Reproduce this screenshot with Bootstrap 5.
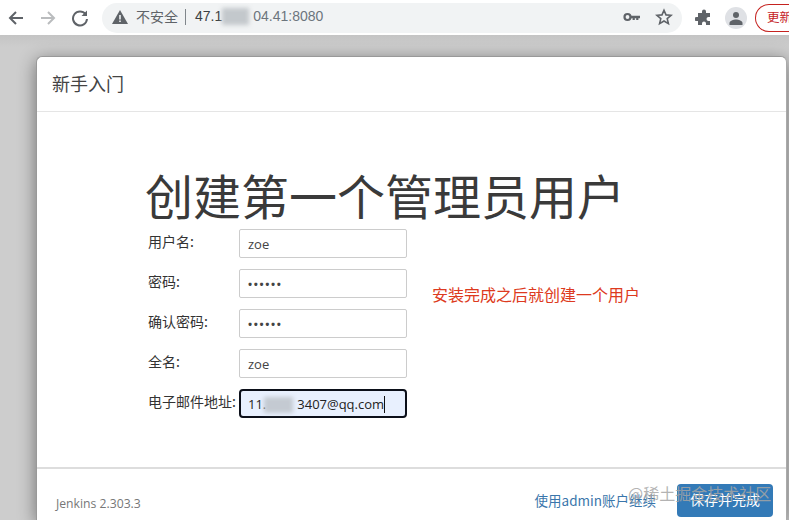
<!DOCTYPE html>
<html lang="zh">
<head>
<meta charset="utf-8">
<title>Jenkins</title>
<link href="https://cdn.jsdelivr.net/npm/bootstrap@5.3.0/dist/css/bootstrap.min.css" rel="stylesheet">
<style>
html,body{height:520px;overflow:hidden;}
body{font-family:"Liberation Sans","Noto Sans CJK SC",sans-serif;background:#ccc;color:#333;position:relative;}
.tb{height:35px;background:#fff;padding-left:7px;overflow:hidden;}
.ic{width:18px;height:18px;flex:none;}
.ic-gap{margin-left:14px;}
.omni{margin-left:13px;width:580px;height:30px;flex:none;background:#f1f3f4;border-radius:15px;padding:0 0 2px 9px;font-size:14px;color:#3c4043;}
.omni-sec{color:#5f6368;font-size:14px;margin-left:7px;font-family:"Noto Sans CJK SC",sans-serif;}
.omni-sep{width:1px;height:16px;background:#80868b;margin:0 9px 0 7px;}
.omni-host{position:relative;white-space:nowrap;}
.omni-gap{display:inline-block;width:31px;}
.smudge{position:absolute;background:#c3c8cc;filter:blur(2px);}
.smudge-a{left:27px;top:2px;width:27px;height:17px;}
.smudge-b{left:16px;top:2px;width:29px;height:16px;background:#c4cad2;}
.omni-end{margin-left:auto;gap:14px;padding-right:9px;}
.ext{margin-left:13px;}
.upd{width:60px;height:28px;border:1px solid #c5221f;border-radius:14px 0 0 14px;border-right:0;color:#c5221f;font-size:12.5px;padding-left:11px;margin-left:8px;white-space:nowrap;overflow:hidden;font-family:"Noto Sans CJK SC",sans-serif;flex:none;}
.avatar{width:22px;height:22px;border-radius:50%;background:#dfe1e5;flex:none;margin-left:12px;}
.stage{padding:21px 2px 0 36px;background:linear-gradient(#c4c4c4,#cdcdcd 12px);height:485px;overflow:hidden;}
.wiz{height:464px;background:#fff;border-radius:6px 6px 0 0;border:1px solid #999;border-bottom:0;border-right-color:#aaa;box-shadow:0 4px 18px rgba(0,0,0,.45);}
.wiz-h{height:55px;padding:0 0 2px 15px;border-bottom:1px solid #e5e5e5;font-size:18px;font-family:"Noto Sans CJK SC",sans-serif;font-weight:400;color:#444;}
.wiz-b{height:355px;padding:49px 0 0 109px;position:relative;}
.wiz-t{font-family:"Noto Sans CJK SC",sans-serif;font-weight:400;font-size:48px;line-height:67px;color:#3a3a3a;margin:0 0 0 -1px;white-space:nowrap;}
.frow{height:29px;margin-bottom:11px;font-size:14px;}
.frm{margin-top:1px;}
.lbl{width:93px;padding-left:2px;font-family:"Noto Sans CJK SC",sans-serif;padding-bottom:5px;white-space:nowrap;}
.fld{width:168px;height:29px;border:1px solid #ccc;border-radius:2px;padding:2px 0 0 8px;font-size:13px;font-family:"Open Sans",sans-serif;color:#444;position:relative;}
.dots{letter-spacing:1.6px;font-size:11px;font-weight:700;color:#444;}
.fld-on{border:2px solid #0b0f19;border-radius:4px;background:#e8f0fe;padding-left:7px;color:#222;}
.caret-x{display:inline-block;width:1px;height:17px;background:#111;vertical-align:-4px;}
.note{position:absolute;left:395px;top:170px;color:#dd3a20;font-size:16px;line-height:24px;font-family:"Noto Sans CJK SC",sans-serif;white-space:nowrap;}
.wiz-f{border-top:2px solid #ddd;height:54px;padding:0 13px 0 19px;font-size:12.2px;}
.ver{color:#777;font-family:"Open Sans",sans-serif;margin-top:26px;}
.lnk{color:#3a76ab;font-size:13.5px;font-family:"Noto Sans CJK SC",sans-serif;text-decoration:none;margin-right:21px;white-space:nowrap;margin-top:21px;}
.go{background:#337ab7;color:#fff;border:0;border-radius:4px;width:96px;height:33px;font-size:14px;padding:0 0 2px;font-family:"Noto Sans CJK SC",sans-serif;margin-top:15px;}
.wm{position:absolute;left:628px;top:481px;font-size:16px;line-height:24px;color:rgba(165,165,165,.85);font-family:"Noto Sans CJK SC",sans-serif;white-space:nowrap;}
</style>
</head>
<body>
<div class="tb d-flex align-items-center">
  <svg class="ic" viewBox="0 0 18 18"><path d="M16 9H3.500M9 3 3 9l6 6" fill="none" stroke="#5f6368" stroke-width="2"/></svg>
  <svg class="ic ic-gap" viewBox="0 0 18 18"><path d="M2 9h12.500M9 3l6 6-6 6" fill="none" stroke="#babcbe" stroke-width="2"/></svg>
  <svg class="ic ic-gap" viewBox="0 0 18 18"><path d="M14.600 5.200A7 7 0 1 0 16 10" fill="none" stroke="#5f6368" stroke-width="2"/><path d="M16 1.500V7h-5.500z" fill="#5f6368"/></svg>
  <div class="omni d-flex align-items-center">
    <svg class="ic" viewBox="0 0 18 18"><path d="M9 2 17 16H1z" fill="#5f6368"/><path d="M8.200 7h1.600v4.500H8.200zM8.200 12.500h1.600V14H8.200z" fill="#f1f3f4"/></svg>
    <span class="omni-sec">不安全</span><span class="omni-sep"></span>
    <span class="omni-host">47.1<span class="omni-gap"></span><span class="text-secondary">04.41:8080</span><span class="smudge smudge-a"></span></span>
    <div class="omni-end d-flex align-items-center">
      <svg class="ic" viewBox="0 0 18 18"><circle cx="4.500" cy="9" r="3" fill="none" stroke="#5f6368" stroke-width="2.200"/><path d="M7 7.800h10v2.400h-1.600V12h-2.200v-1.800h-1.400V12H9.600v-1.800H7z" fill="#5f6368"/></svg>
      <svg class="ic" viewBox="0 0 18 18"><path d="M9 2.200l2 4.700 5.100.4-3.900 3.300 1.200 5L9 13l-4.400 2.600 1.200-5-3.900-3.300L7 6.900z" fill="none" stroke="#5f6368" stroke-width="1.600"/></svg>
    </div>
  </div>
  <svg class="ic ext" viewBox="0 0 18 18"><path d="M7 2.500a2 2 0 0 1 4 0V4h4v4h-1.500a2 2 0 0 0 0 4H15v4h-4v-1.500a2 2 0 0 0-4 0V16H3v-4H1.500a2 2 0 0 1 0-4H3V4h4z" fill="#5f6368"/></svg>
  <div class="avatar d-flex align-items-center justify-content-center">
    <svg width="16" height="16" viewBox="0 0 16 16"><circle cx="8" cy="5" r="3" fill="#5f6368"/><path d="M1.500 15v-2c0-2.300 4-3.500 6.500-3.500s6.500 1.200 6.500 3.500v2z" fill="#5f6368"/></svg>
  </div>
  <div class="upd d-flex align-items-center">更新</div>
</div>
<div class="stage">
  <div class="wiz">
    <div class="wiz-h d-flex align-items-center">新手入门</div>
    <div class="wiz-b">
      <h1 class="wiz-t">创建第一个管理员用户</h1>
      <div class="frm">
        <div class="frow d-flex align-items-center"><span class="lbl">用户名:</span><div class="fld d-flex align-items-center">zoe</div></div>
        <div class="frow d-flex align-items-center"><span class="lbl">密码:</span><div class="fld d-flex align-items-center"><span class="dots">••••••</span></div></div>
        <div class="frow d-flex align-items-center"><span class="lbl">确认密码:</span><div class="fld d-flex align-items-center"><span class="dots">••••••</span></div></div>
        <div class="frow d-flex align-items-center"><span class="lbl">全名:</span><div class="fld d-flex align-items-center">zoe</div></div>
        <div class="frow d-flex align-items-center"><span class="lbl">电子邮件地址:</span><div class="fld fld-on d-flex align-items-center"><span class="omni-host">11.<span class="omni-gap"></span>3407@qq.com<span class="caret-x"></span><span class="smudge smudge-b"></span></span></div></div>
      </div>
      <div class="note">安装完成之后就创建一个用户</div>
    </div>
    <div class="wiz-f d-flex justify-content-between align-items-start">
      <span class="ver">Jenkins 2.303.3</span>
      <div class="d-flex align-items-start">
        <a class="lnk" href="#">使用admin账户继续</a>
        <button class="go" type="button">保存并完成</button>
      </div>
    </div>
  </div>
</div>
<div class="wm">@稀土掘金技术社区</div>
<script src="https://cdn.jsdelivr.net/npm/bootstrap@5.3.0/dist/js/bootstrap.bundle.min.js"></script>
</body>
</html>
